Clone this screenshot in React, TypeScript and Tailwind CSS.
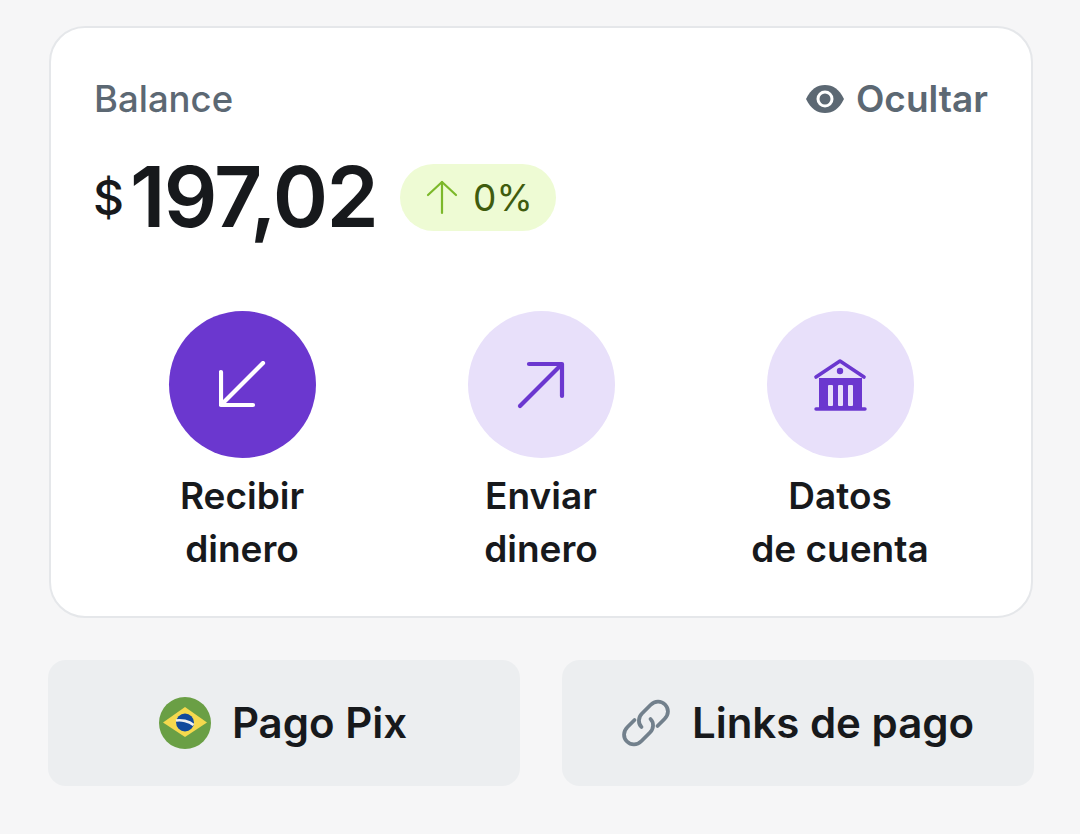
import React from "react";

function ArrowIn() {
  return (
    <svg width="48" height="48" viewBox="0 0 48 48" fill="none" stroke="#ffffff" strokeWidth="4.2" strokeLinecap="round" strokeLinejoin="round" className="translate-x-[1px]">
      <path d="M44 2 L3 43" />
      <path d="M2 11 V44 H34" />
    </svg>
  );
}

function ArrowOut() {
  return (
    <svg width="48" height="48" viewBox="0 0 48 48" fill="none" stroke="#6b37cf" strokeWidth="4.2" strokeLinecap="round" strokeLinejoin="round">
      <path d="M3 45 L44 4" />
      <path d="M12 3 H45 V35" />
    </svg>
  );
}

function Bank() {
  return (
    <svg width="54" height="54" viewBox="0 0 54 54" fill="none">
      <path d="M3 19 L27 3 L51 19" stroke="#6b37cf" strokeWidth="3.6" strokeLinecap="round" strokeLinejoin="round" />
      <circle cx="27" cy="13" r="3.2" fill="#6b37cf" />
      <path d="M6 20 H49 V50 H6 Z" fill="#6b37cf" />
      <path d="M3 51 H52" stroke="#6b37cf" strokeWidth="3.4" strokeLinecap="round" />
      <rect x="15" y="27" width="5" height="21" rx="1" fill="#e8e0fa" />
      <rect x="25" y="27" width="5" height="21" rx="1" fill="#e8e0fa" />
      <rect x="35" y="27" width="5" height="21" rx="1" fill="#e8e0fa" />
    </svg>
  );
}

function Eye() {
  return (
    <svg width="38" height="30" viewBox="0 0 38 30">
      <path d="M0 15 C5 5 11 1 19 1 C27 1 33 5 38 15 C33 25 27 29 19 29 C11 29 5 25 0 15 Z" fill="#5c6873" />
      <circle cx="19" cy="15" r="8.5" fill="#ffffff" />
      <circle cx="19" cy="15" r="5.5" fill="#5c6873" />
    </svg>
  );
}

function Brazil() {
  return (
    <svg width="52" height="52" viewBox="0 0 52 52">
      <circle cx="26" cy="26" r="26" fill="#6a9f45" />
      <path d="M26 10 L48 25.5 L26 40 L4 25.5 Z" fill="#f5d94e" />
      <circle cx="26" cy="25.5" r="9" fill="#114a9c" />
      <path d="M17 23.5 C22 22.5 30 24 34.5 28" stroke="#f0f0f0" strokeWidth="2.6" fill="none" />
    </svg>
  );
}

function LinkIcon() {
  return (
    <svg width="48" height="48" viewBox="0 0 48 48" fill="none" stroke="#72808c" strokeWidth="3.8" strokeLinecap="round" strokeLinejoin="round">
      <path d="M12.5 21 L5.5 28 C1 32.5 1 38.5 5 42.5 C9 46.5 15 46.5 19.5 42 L28 33.5 C32 29.5 32 23.5 28.5 20" />
      <path d="M35.5 27 L42.5 20 C47 15.5 47 9.5 43 5.5 C39 1.5 33 1.5 28.5 6 L20 14.5 C16 18.5 16 24.5 19.5 28" />
    </svg>
  );
}

function Action({ icon, top, bottom, solid }: { icon: React.ReactNode; top: string; bottom: string; solid?: boolean }) {
  return (
    <div className="flex flex-col items-center">
      <div className={`flex h-[147px] w-[147px] items-center justify-center rounded-full ${solid ? "bg-[#6b37cf]" : "bg-[#e8e0fa]"}`}>
        {icon}
      </div>
      <div className="mt-[11px] text-center text-[37px] font-semibold leading-[53px] text-[#17191c]">
        <div>{top}</div>
        <div>{bottom}</div>
      </div>
    </div>
  );
}

export default function App() {
  return (
    <div className="flex h-[834px] w-[1080px] flex-col bg-[#f6f6f7] pl-[48px] pr-[46px] pt-[26px] font-['Inter',sans-serif]">
      <div className="mx-px h-[592px] rounded-[36px] border-2 border-[#e5e7ea] bg-white px-[43px] pt-[48px]">
        <div className="flex items-center justify-between font-medium leading-[46px] text-[#5c6873]">
          <span className="text-[36.5px]">Balance</span>
          <span className="flex items-center gap-[12px]">
            <Eye />
            <span className="text-[37px] font-semibold">Ocultar</span>
          </span>
        </div>
        <div className="mt-[23px] flex items-center">
          <span className="-ml-[1px] mr-[6px] mt-[2px] text-[48px] font-medium leading-none text-[#17191c]">$</span>
          <span className="text-[84px] font-semibold leading-[104px] tracking-[-1.8px] text-[#17191c]">197,02</span>
          <span className="ml-[23px] flex h-[67px] w-[156px] items-center justify-center gap-[15px] rounded-full bg-[#eefbd4] pl-[3px]">
            <svg width="32" height="36" viewBox="0 0 32 36" fill="none" stroke="#7cb82a" strokeWidth="2.2" strokeLinecap="round" strokeLinejoin="round">
              <path d="M16 34 V3" />
              <path d="M2 16 L16 3 L30 16" />
            </svg>
            <span className="text-[37px] font-normal leading-none text-[#3f5c0e]">0%</span>
          </span>
        </div>
        <div className="-ml-[1.5px] mt-[62px] grid grid-cols-[repeat(3,299px)]">
          <Action icon={<ArrowIn />} top="Recibir" bottom="dinero" solid />
          <Action icon={<ArrowOut />} top="Enviar" bottom="dinero" />
          <Action icon={<Bank />} top="Datos" bottom="de cuenta" />
        </div>
      </div>
      <div className="mt-[42px] grid grid-cols-2 gap-[42px]">
        <div className="flex h-[126px] items-center justify-center gap-[21px] rounded-[18px] bg-[#eceef0] pr-[2px]">
          <Brazil />
          <span className="text-[42px] font-semibold leading-none text-[#17191c]">Pago Pix</span>
        </div>
        <div className="flex h-[126px] items-center justify-center gap-[22px] rounded-[18px] bg-[#eceef0]">
          <LinkIcon />
          <span className="text-[42px] font-semibold leading-none text-[#17191c]">Links de pago</span>
        </div>
      </div>
    </div>
  );
}
